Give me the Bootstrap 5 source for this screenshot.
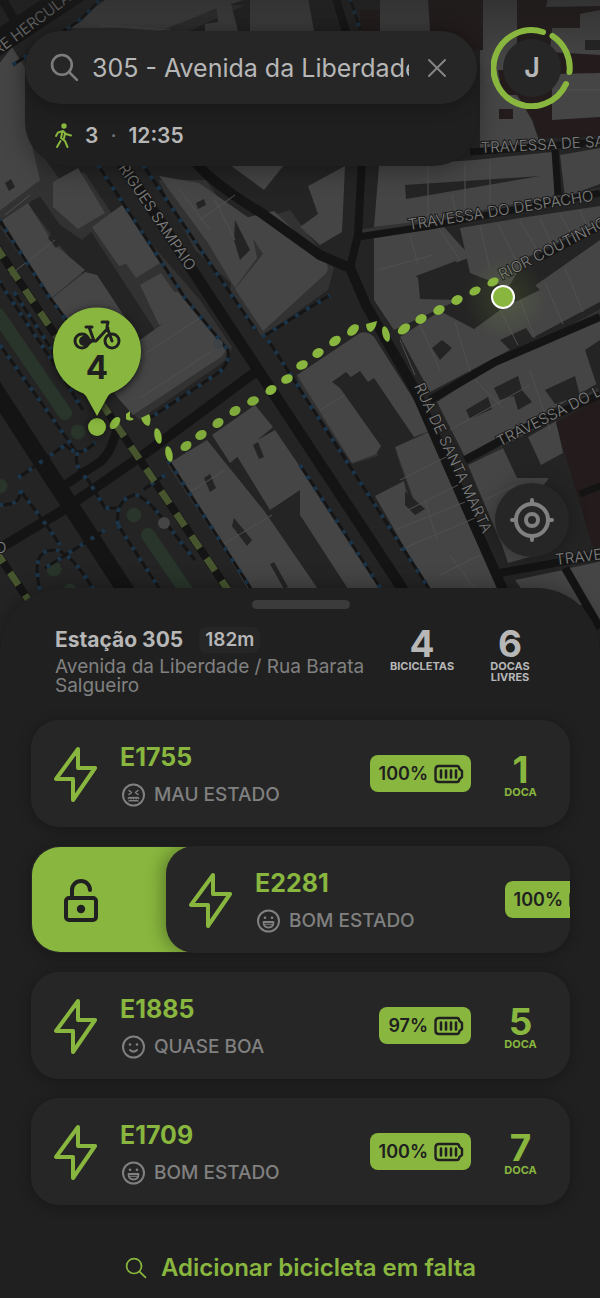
<!DOCTYPE html>
<html lang="pt" data-bs-theme="dark">
<head>
<meta charset="utf-8">
<meta name="viewport" content="width=device-width, initial-scale=1">
<title>Estação 305</title>
<link href="https://cdn.jsdelivr.net/npm/bootstrap@5.3.0/dist/css/bootstrap.min.css" rel="stylesheet">
<style>
:root{--lime:#88b63e;--ink:#202020;--panel:#262626;--text:#b7b7b7;--dim:#808080}
body{background:var(--ink);color:var(--text);font-family:"Inter","Liberation Sans",sans-serif;line-height:1.2}
button{color:inherit;font:inherit}
.map-stage{min-height:640px;background:#242424;overflow:hidden}
.map-art{inset:0;width:100%;height:100%;z-index:0}
.topbar{padding:27px 27px 0 25px;gap:14px;z-index:1}
.search-box{margin-top:4px;border-radius:44px;background:#1f1f1f;box-shadow:0 4px 24px rgba(0,0,0,.35);min-width:0}
.search-row{height:73px;border-radius:44px;background:var(--panel);padding:0 25px;box-shadow:0 4px 16px rgba(0,0,0,.25);gap:13px}
.search-input{background:none;border:0;outline:0;color:var(--text);font-size:25px;padding:0;min-width:0}
.bare{background:none;border:0;padding:0}
.trip{height:64px;padding:0 28px;font-size:21px;font-weight:600;margin-bottom:-2px}
.avatar{width:82px;height:82px;flex:none}
.avatar-face{width:58px;height:58px;background:var(--panel);font-size:27px;font-weight:600}
.avatar svg{inset:0}
.locate{right:31px;bottom:83px;width:74px;height:74px;background:var(--panel);color:var(--dim);box-shadow:0 0 20px rgba(0,0,0,.3)}
.locate:hover{background:#2c2c2c}
.sheet{margin-top:-52px;background:var(--ink);border-radius:64px 64px 0 0;padding:12px 30px 12px 31px;box-shadow:0 -2px 20px rgba(0,0,0,.3);z-index:2}
.grabber{width:98px;height:9px;background:#3b3b3b}
.station{padding:18px 22px 0 24px;margin-bottom:24px;min-height:87px}
.station h1{font-size:21px;font-weight:700;line-height:26px;color:var(--text)}
.distance{font-size:19px;font-weight:600;line-height:26px;background:#262626;border-radius:8px;padding:0 6px}
.address{font-size:19px;line-height:19px;color:var(--dim);margin-top:4px}
.stat{width:76px}
.big-num{font-size:37px;font-weight:700;line-height:34px}
.cap{font-size:11px;font-weight:700;line-height:11px}
.bikes{gap:19px}
.bike-row{border-radius:28px;box-shadow:0 2px 14px rgba(0,0,0,.3);background:var(--panel)}
.bike{flex:0 0 100%;min-height:107px;border-radius:28px;background:var(--panel);padding-left:22px}
.swiped .bike{margin-left:-28px;box-shadow:-4px 0 16px rgba(0,0,0,.3)}
.unlock{flex:0 0 162px;background:var(--lime);color:#202020;padding-left:32px;margin:1px 0 1px 1px;border-radius:28px 0 0 28px}
.bike-name{font-size:25px;font-weight:700;line-height:30px;color:var(--lime)}
.bike-info{margin-left:23px;padding-top:2px}
.state{font-size:19px;font-weight:500;line-height:26px;color:var(--dim);gap:7px;margin-top:10px}
.charge{background:var(--lime);color:#202020;border-radius:8px;height:37px;font-size:18px;font-weight:600;padding:0 7px 0 9px;gap:6px}
.dock{width:99px;color:var(--lime);padding-top:3px}
.add-bike{color:var(--lime);font-size:24px;font-weight:600;line-height:32px;gap:14px;margin-top:47px}
.road{stroke:#141414;fill:none}
.kerb{stroke:#151515;stroke-width:3;fill:none}
.walk{stroke:#1b3448;stroke-width:4;stroke-dasharray:4 9;fill:none}
.lots{stroke:#505050;stroke-width:1;fill:none}
.street{font-family:"Inter",sans-serif;font-weight:300;font-size:15px;fill:#808080;stroke:#191919;stroke-width:2;paint-order:stroke}
</style>
</head>
<body>
<svg class="d-none" aria-hidden="true">
  <symbol id="bolt" viewBox="0 0 44 56"><path d="M25 3 3 33h17v21l22-32H25z" fill="none" stroke="currentColor" stroke-width="4" stroke-linejoin="round"/></symbol>
  <symbol id="lens" viewBox="0 0 28 28"><g fill="none" stroke="currentColor" stroke-linecap="round"><circle cx="11.500" cy="11.500" r="9.500"/><path d="m18.500 18.500 7.500 7.500"/></g></symbol>
  <symbol id="battery" viewBox="0 0 30 20"><path d="M5 2h18q2 0 2.500 3l2.500 2v6l-2.500 2q-.5 3-2.500 3H5q-3.500 0-3.500-3.500v-9Q1.500 2 5 2z" fill="none" stroke="currentColor" stroke-width="2.400" stroke-linejoin="round"/><path d="M7 6.500v7m5-7v7m5-7v7m5-7v7" stroke="currentColor" stroke-width="2.600" stroke-linecap="round"/></symbol>
  <symbol id="face-good" viewBox="0 0 24 24"><g fill="none" stroke="currentColor" stroke-width="2"><circle cx="12" cy="12" r="10.500"/><path d="M7 13h10q0 5.500-5 5.500T7 13z" stroke-linejoin="round" stroke-width="1.800"/><path d="M8.500 15.300h7" stroke-width="1"/></g><circle cx="8.500" cy="8.800" r="1.300" fill="currentColor"/><circle cx="15.500" cy="8.800" r="1.300" fill="currentColor"/></symbol>
  <symbol id="face-fair" viewBox="0 0 24 24"><g fill="none" stroke="currentColor" stroke-width="2"><circle cx="12" cy="12" r="10.500"/><path d="M8.500 15q3.500 3.200 7 0" stroke-linecap="round"/></g><circle cx="8.500" cy="9.500" r="1.300" fill="currentColor"/><circle cx="15.500" cy="9.500" r="1.300" fill="currentColor"/></symbol>
  <symbol id="face-bad" viewBox="0 0 24 24"><g fill="none" stroke="currentColor" stroke-width="2"><circle cx="12" cy="12" r="10.500"/><path d="m7.500 7.500 2.500 2-2.500 2m9-4-2.500 2 2.500 2M6.800 15.500q1.300-2 2.600 0 1.300-2 2.600 0 1.300-2 2.600 0 1.300-2 2.600 0M7.500 18q1.500-1 3 0 1.500-1 3 0 1.500-1 3 0" stroke-width="1.500" stroke-linecap="round" stroke-linejoin="round"/></g></symbol>
</svg>

<main>
<section class="map-stage position-relative" aria-label="Mapa">
  <svg class="map-art position-absolute" viewBox="0 0 600 640" preserveAspectRatio="xMidYMin slice">
    <defs>
      <radialGradient id="halo"><stop offset=".3" stop-color="#88b63e" stop-opacity=".12"/><stop offset="1" stop-color="#88b63e" stop-opacity="0"/></radialGradient>
      <linearGradient id="dusk" x2="0" y2="1"><stop stop-color="#1c1c1c" stop-opacity=".45"/><stop offset="1" stop-color="#1c1c1c" stop-opacity="0"/></linearGradient>
    </defs>
    <rect width="600" height="640" fill="#242424"/>
    <!-- gardens -->
    <g fill="#29352a" stroke="#29352a" stroke-linecap="round"><path d="m-2 315 67 98M148 535l45 66" stroke-width="14"/><circle cx="78" cy="432" r="7"/><circle cx="134" cy="515" r="7"/><circle cx="54" cy="569" r="7"/><circle cx="0" cy="486" r="7"/><path d="m70 590 10 15" stroke-width="13"/></g>
    <g fill="#241c1c"><path d="M360 10H380V31H360zM428-1H600V136L540 138 516 95 483 50 430 52z"/></g>
    <!-- building sides -->
    <g fill="#323232">
      <path d="M60 37 110 5 245 5 170 40H80zM-2 75 25 55V130L60 180 42 195-2 222zM0 227 30 207 95 290 55 306zM37 192 84 172 112 214 82 240 60 225zM90 230 122 210 200 300 232 347Q230 358 218 366L139 420 120 400 155 330zM158 180 206 180 258 255 237 289 195 250zM240 225 290 210 334 268 328 290 262 337 230 290z"/>
      <path d="m296 375 4 12 52 77 26-8-2-8zM395 450l22 62 8-2-3-15zM167 464l4-6 90 130h-12zM470 465 600 393v-7zM430 403l170-88v-6zM358 230l242-42v8L358 238z"/>
    </g>
    <!-- buildings -->
    <g fill="#454545">
      <path d="M65 28 108-2H250L215 9 160 31 120 28zM205 24 218 22 216 4 230 0 238 31H205zM250 2V-2H308L314 31H250zM380-2H428L430 31H380zM483-1H517V95L532 120 541 147 480 149V50H483zM548-2H600V6L546 7zM580 14 600 10V50L600 55 550 52 552 28H580zM552 74 600 73V117L552 120z"/>
      <path d="M-2 65 12 47 25 68V115L40 180-2 212z"/>
      <path d="m2 220 26-17 25 40 32 27-35 29zM50 300 85 272 97 275 140 340 165 322 143 290 178 292 225 345Q227 352 221 357L133 415 118 398z"/>
      <path d="m53 182 25-14 27 45-27 16-25-22zM92 227l30-22 36 49-39 12zM125 262l23-16 12 17-24 15zM140 285l21-12 28 40-30 12z"/>
      <path d="m159 176 40 7 50 35 8 40-22 30-27-45zM230 165h54l-20 25zM240 219l34-8 52 50q5 10-4 16l-59 54-28-42 28-35zM312 184l33-18-3 66-22 13-20-18 18-13-10-28z"/>
      <path d="M379 166 475 160 552 152 555 196 430 220 374 227zM560 155 600 148V184L565 197z"/>
      <path d="m374 238 70-11 27 30-53 20 2 22 38 1-64 30-20-30zM460 228l60-10 80-12V222l-74 36-18 30-38-15z"/>
      <path d="m400 337 40-26 34 18 26-19 100-70v62L430 392z"/>
      <path d="m171 462 36-22 58 72 55 80h-70zM212 435 255 405 273 427 230 463zM235 453 275 430 385 592H350L300 515 300 490 270 510z"/>
      <path d="M297 375 360 333q10-3 16 7L433 430 414 437 374 378 368 382 360 371 351 377 346 372 332 382 340 388 381 446 376 454 352 463z"/>
      <path d="m395 447 38-17 40 97 32 65h-75L375 496l29-15 2 9 11 18z"/>
      <path d="M437 402 500 360 600 316v66L560 405 465 457zM468 465l35-17 14 30 32 0-48 65zM528 437l28-16 7 32-22 12zM498 533l16-10 30 30-36 10zM515 580l48-10 20 35h-50zM570 568l32-7v65z"/>
    </g>
    <!-- courtyards -->
    <g fill="#242424">
      <path d="M405 185 540 176 406 199zM416 276l40-15 9 22-28 15zM498 290l30-12 12 12-25 12zM466 410l22-13 4 12-22 10zM494 388l24-12 4 14 10 12-14 8-4-14-14 4zM500 340l26-12 8 12-24 10zM545 390l30-14 5 20-25 8zM585 350l15-10v55z"/>
      <path d="m52 232 10 10-6 6-8-10zM5 183l6-4 4 8-6 4zM196 203l8-4 2 6-8 4zM235 220l15 30-10 10-6-20zM204 478l6-4 6 14-6 4zM234 518l18 22-5 6-15-20zM270 564l4-2 14 25-4 2zM253 445l5-3 6 15-5 2zM600 40V50H585V40zM405 491l20 18-10 6-10-10zM432 348l10-8 10 8-12 12z"/>
    </g>
    <path d="M498 70H520V95H502zM556 423 600 398V560L592 545zM499 109h14v10h-14z" fill="#241c1c"/>
    <!-- roads -->
    <g class="road">
      <path d="M-10 48 78-10" stroke-width="24"/><path d="m0-5 22 38" stroke-width="9"/>
      <path d="M90 115 400 585 420 620" stroke-width="11"/>
      <path d="m-10 382 160 246" stroke-width="17"/>
      <path d="M-5 245 50 327 245 615M-5 550l40 60" stroke-width="8"/>
      <path d="M0 548 60 512 150 450 258 370" stroke-width="10"/>
      <path d="M65 485 100 462Q112 452 117 428" stroke-width="9"/>
      <path d="M195 162 Q215 185 260 212L320 255 350 268 366 305 415 390 450 470 512 610" stroke-width="10"/>
      <path d="M362 160 358 235 350 268M335-5l15 50" stroke-width="8"/>
      <path d="M430 400 495 362 600 317M465 460 520 430 600 395M500 573 600 555M565 568l35 60" stroke-width="8"/>
      <path d="M470 152 600 142M358 237 430 226 600 193M540 258 600 226M580 494l25-10M555 150l3 45" stroke-width="7"/>
    </g>
    <g class="lots">
      <path d="m140 398 70-46M120 370l80-52M190 492l35-22M222 545l50-30M100 25l70 5M10 275l45-35M5 215l25-20M180 190l30 40M215 200l20 40M200 220l35-25M428 166v50M465 163v45M490 162v40M452 195l5 25M410 235l8 30M440 230l20 30M480 225l10 45M498 224l20 40M520 221l18 30M540 218l12 28M560 214l12 22M580 210l8 18M378 270l55-15"/>
      <path d="m400 340 15 35M420 325l20 45M455 322l15 50M500 310l18 35M520 300l15 38M545 282l18 42M565 268l18 44M450 430l80-45M475 380l30 30M530 370l20 60M320 410l25-15M400 480l50-25M408 510l50-25M395 530l70-28M400 550l75-32M425 500l12 40M450 555l25 34M440 575l40-20M485 500l30-15M485 80h15M555 90h45"/>
    </g>
    <g class="kerb">
      <path id="w1" d="M98 165 185 298 228 350Q230 366 215 375L150 418"/><path id="w2" d="M143 165 235 300 256 330M262 337 330 295M268 340 430 590M300 465 385 595"/><path id="w3" d="M-2 218 50 298 85 345M-2 280 55 365 83 410M0 345 75 450M14 292 75 385"/><path id="w4" d="M18 478 65 445Q80 460 95 442M78 452Q72 465 88 480L105 508 118 508M118 525Q115 500 134 495 145 495 165 522L195 560M118 525 170 605M105 530 45 568M20 490Q22 505 0 505M20 490 50 530 60 545M40 590Q30 550 54 550 70 550 95 592M168 460 255 595M165 475 143 490M350-2l10 31M13 65 80 20 100 0"/>
    </g>
    <g class="walk"><use href="#w1"/><use href="#w2"/><use href="#w3"/><use href="#w4"/></g>
    <path d="M-5 245 50 327 245 615M-5 550l40 60" fill="none" stroke="#47552f" stroke-width="7" stroke-dasharray="15 12"/>
    <circle cx="164" cy="523" r="6" fill="#454545"/><circle cx="218" cy="344" r="5" fill="#3c4246"/>
    <!-- street names -->
    <g class="street">
      <text transform="translate(4 51) rotate(-37)" x="-8">RE HERCULANO</text>
      <text transform="translate(118 168) rotate(56)">RIGUES SAMPAIO</text>
      <text transform="translate(481 153) rotate(-3)">TRAVESSA DE SANTA</text>
      <text transform="translate(409 230) rotate(-9)">TRAVESSA DO DESPACHO</text>
      <text transform="translate(502 280) rotate(-27)">RIOR COUTINHO</text>
      <text transform="translate(414 386) rotate(65)">RUA DE SANTA MARTA</text>
      <text transform="translate(500 447) rotate(-27)">TRAVESSA DO L</text>
      <text transform="translate(556 565) rotate(-7)">TRAVESSA</text>
      <text x="-5" y="553">O</text>
    </g>
    <rect width="600" height="60" fill="url(#dusk)"/>
    <!-- walking route -->
    <circle cx="505" cy="298" r="42" fill="url(#halo)"/>
    <g fill="#88b63e">
      <ellipse transform="translate(115 423) rotate(-52)" rx="7" ry="4"/><path d="M126 414l4-3v6l4 2q-4 3-8 0zM141 418l8-4q3 5 0 12-6-1-8-8z"/><ellipse transform="translate(158 436) rotate(78)" rx="8" ry="3.500"/><ellipse transform="translate(169 454) rotate(78)" rx="8" ry="3.500"/>
      <g opacity=".93"><ellipse transform="translate(186 446) rotate(-38)" rx="6" ry="4.500"/><ellipse transform="translate(201 435) rotate(-30)" rx="6" ry="4.500"/><ellipse transform="translate(218 423) rotate(-34)" rx="6" ry="4.500"/><ellipse transform="translate(235 411) rotate(-34)" rx="6" ry="4.500"/><ellipse transform="translate(253 401) rotate(-20)" rx="6" ry="4.500"/></g><ellipse transform="translate(271 390) rotate(-34)" rx="6" ry="4.500"/><ellipse transform="translate(287 379) rotate(-24)" rx="6" ry="4.500"/><ellipse transform="translate(302 365) rotate(-24)" rx="6" ry="4.500"/><ellipse transform="translate(318 353) rotate(-28)" rx="6" ry="4.500"/><ellipse transform="translate(335 341) rotate(-38)" rx="6.500" ry="4.500"/><ellipse transform="translate(353 330) rotate(-44)" rx="7" ry="4.500"/>
      <path d="m366 324 11-3q-1 8-6 11-5-1-5-8z"/><ellipse transform="translate(386 334) rotate(75)" rx="8" ry="3.500"/>
      <ellipse transform="translate(404 329) rotate(-38)" rx="7" ry="4.500"/><ellipse transform="translate(421 319) rotate(-28)" rx="6" ry="4.500"/><ellipse transform="translate(439 310) rotate(-28)" rx="6" ry="4.500"/><ellipse transform="translate(457 300) rotate(-28)" rx="6" ry="4.500"/><ellipse transform="translate(475 291) rotate(-28)" rx="6" ry="4"/><ellipse transform="translate(493 282) rotate(-28)" rx="6" ry="4"/>
      <circle cx="503" cy="297" r="11" stroke="#fff" stroke-width="2"/>
      <circle cx="97" cy="427" r="9" style="filter:drop-shadow(0 0 4px #111)"/>
      <path d="M97 416 86 396Q84 393 80 392A44 44 0 1 1 114 392Q110 393 108 396z" style="filter:drop-shadow(0 2px 4px #111)"/>
    </g>
    <!-- bicycle on the station pin -->
    <g fill="none" stroke="#202020" stroke-width="3" stroke-linecap="round" stroke-linejoin="round">
      <circle cx="82" cy="341" r="7"/><circle cx="112" cy="341" r="7"/><path d="M86 327h6M89 327l5 14M82 341h14l12-13M102 322h6l-1 5 5 14M84 337l8 4-7 5"/>
    </g>
    <circle cx="84" cy="341" r="5" fill="#202020"/>
    <text x="97" y="379" text-anchor="middle" font-family="Inter, sans-serif" font-size="33" font-weight="700" fill="#202020">4</text>
  </svg>

  <header class="topbar position-relative d-flex align-items-start">
    <div class="search-box flex-grow-1">
      <form class="search-row d-flex align-items-center" onsubmit="return false">
        <label for="q" class="d-flex"><svg width="29" height="29" stroke-width="2.500" color="#7d7d7d" aria-label="Pesquisar"><use href="#lens"/></svg></label>
        <input id="q" class="search-input flex-grow-1" type="text" value="305 - Avenida da Liberdade">
        <button class="bare d-flex p-1" type="button" aria-label="Limpar"><svg width="22" height="22" viewBox="0 0 22 22"><path d="m3 3 16 16M19 3 3 19" stroke="#858585" stroke-width="2" stroke-linecap="round"/></svg></button>
      </form>
      <div class="trip d-flex align-items-center">
        <svg width="20" height="26" viewBox="0 0 20 26" fill="none" stroke="#88b63e" stroke-width="2" stroke-linecap="round" stroke-linejoin="round" aria-hidden="true"><circle cx="11" cy="3" r="1.700" fill="#88b63e"/><path d="M3 13 5 9.500l5-1.500 3 3 5 1.500M9.500 8 8 15l4 3 2.500 6M7.500 18 4 24M12 10.500l-1 5"/></svg>
        <span class="ms-2 ps-1">3</span><span class="mx-2 px-1 fw-normal text-secondary">·</span><span>12:35</span>
      </div>
    </div>
    <button class="avatar bare position-relative d-flex align-items-center justify-content-center" type="button" aria-label="Perfil">
      <span class="avatar-face rounded-circle d-flex align-items-center justify-content-center">J</span>
      <svg class="position-absolute" width="82" height="82" viewBox="0 0 82 82" fill="none" stroke="#88b63e" stroke-width="6" stroke-linecap="round"><path d="M61.500 9A38 38 0 0 1 78.500 45M75 57A38 38 0 1 1 52 5"/></svg>
    </button>
  </header>

  <button class="locate btn rounded-circle border-0 p-0 position-absolute d-flex align-items-center justify-content-center" type="button" aria-label="A minha localização">
    <svg width="46" height="46" viewBox="0 0 46 46" fill="none" stroke="currentColor" stroke-width="4" stroke-linecap="round"><circle cx="23" cy="23" r="16"/><circle cx="23" cy="23" r="6"/><path d="M23 3v4M23 39v4M3 23h4M39 23h4"/></svg>
  </button>
</section>

<section class="sheet position-relative">
  <div class="grabber rounded-pill mx-auto"></div>
  <div class="station d-flex">
    <div class="flex-grow-1">
      <div class="d-flex align-items-center gap-3">
        <h1 class="m-0">Estação 305</h1><span class="distance">182m</span>
      </div>
      <p class="address mb-0">Avenida da Liberdade / Rua Barata Salgueiro</p>
    </div>
    <div class="d-flex gap-2 text-center flex-shrink-0">
      <div class="stat"><div class="big-num">4</div><div class="cap">BICICLETAS</div></div>
      <div class="stat ms-1"><div class="big-num">6</div><div class="cap">DOCAS<br>LIVRES</div></div>
    </div>
  </div>

  <div class="bikes d-flex flex-column">
    <article class="bike-row d-flex overflow-hidden">
      <div class="bike d-flex align-items-center">
        <svg width="44" height="56" color="#88b63e"><use href="#bolt"/></svg>
        <div class="bike-info flex-grow-1"><div class="bike-name">E1755</div><div class="state d-flex align-items-center"><svg width="27" height="24"><use href="#face-bad"/></svg>MAU ESTADO</div></div>
        <div class="charge d-flex align-items-center">100%<svg width="30" height="20"><use href="#battery"/></svg></div>
        <div class="dock text-center"><div class="big-num">1</div><div class="cap">DOCA</div></div>
      </div>
    </article>
    <article class="bike-row swiped d-flex overflow-hidden">
      <button class="unlock bare d-flex align-items-center" type="button" aria-label="Desbloquear"><svg width="34" height="44" viewBox="0 0 34 44" fill="none" stroke="currentColor" stroke-width="4" stroke-linecap="round" stroke-linejoin="round"><rect x="2" y="20" width="30" height="22" rx="3"/><path d="M8 20V12a9 9 0 0 1 18 0"/><circle cx="17" cy="31" r="2.200" fill="currentColor"/></svg></button>
      <div class="bike d-flex align-items-center position-relative">
        <svg width="44" height="56" color="#88b63e"><use href="#bolt"/></svg>
        <div class="bike-info flex-grow-1"><div class="bike-name">E2281</div><div class="state d-flex align-items-center"><svg width="27" height="24"><use href="#face-good"/></svg>BOM ESTADO</div></div>
        <div class="charge d-flex align-items-center">100%<svg width="30" height="20"><use href="#battery"/></svg></div>
        <div class="dock"></div>
      </div>
    </article>
    <article class="bike-row d-flex overflow-hidden">
      <div class="bike d-flex align-items-center">
        <svg width="44" height="56" color="#88b63e"><use href="#bolt"/></svg>
        <div class="bike-info flex-grow-1"><div class="bike-name">E1885</div><div class="state d-flex align-items-center"><svg width="27" height="24"><use href="#face-fair"/></svg>QUASE BOA</div></div>
        <div class="charge d-flex align-items-center">97%<svg width="30" height="20"><use href="#battery"/></svg></div>
        <div class="dock text-center"><div class="big-num">5</div><div class="cap">DOCA</div></div>
      </div>
    </article>
    <article class="bike-row d-flex overflow-hidden">
      <div class="bike d-flex align-items-center">
        <svg width="44" height="56" color="#88b63e"><use href="#bolt"/></svg>
        <div class="bike-info flex-grow-1"><div class="bike-name">E1709</div><div class="state d-flex align-items-center"><svg width="27" height="24"><use href="#face-good"/></svg>BOM ESTADO</div></div>
        <div class="charge d-flex align-items-center">100%<svg width="30" height="20"><use href="#battery"/></svg></div>
        <div class="dock text-center"><div class="big-num">7</div><div class="cap">DOCA</div></div>
      </div>
    </article>
  </div>

  <button class="add-bike bare d-flex align-items-center justify-content-center w-100" type="button"><svg width="22" height="22" stroke-width="2.200"><use href="#lens"/></svg>Adicionar bicicleta em falta</button>
</section>
</main>
<script src="https://cdn.jsdelivr.net/npm/bootstrap@5.3.0/dist/js/bootstrap.bundle.min.js"></script>
</body>
</html>
